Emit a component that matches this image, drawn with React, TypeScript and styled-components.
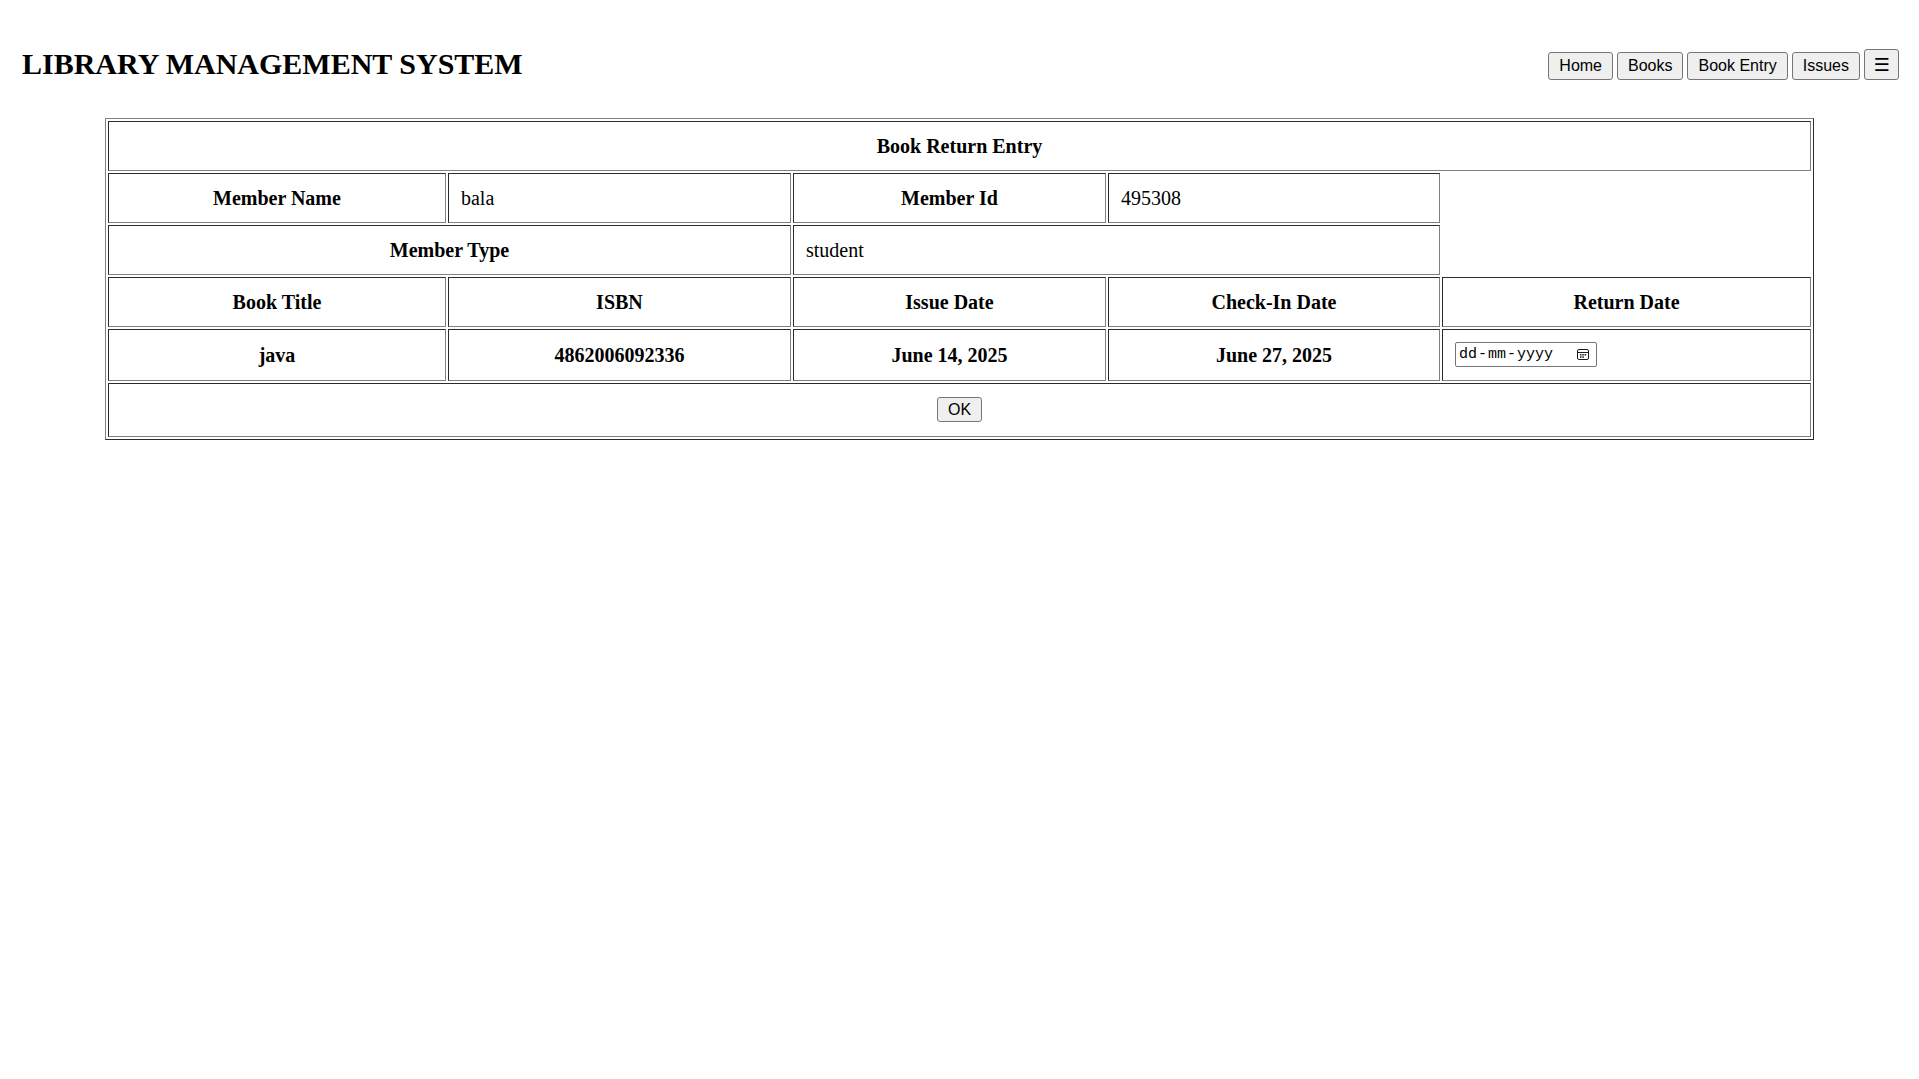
import React from "react";
import styled, { createGlobalStyle, css } from "styled-components";

const GlobalStyle = createGlobalStyle`
  html, body { margin: 0; padding: 0; background: #ffffff; }
  body {
    font-family: "Liberation Serif", "Times New Roman", serif;
    color: #000000;
  }
`;

const Header = styled.header`
  display: flex;
  justify-content: space-between;
  align-items: flex-start;
  padding: 47px 20px 0 22px;
`;

const Title = styled.h1`
  margin: 0;
  font: bold 30px/34px "Liberation Serif", "Times New Roman", serif;
  color: #000000;
`;

const Nav = styled.nav`
  display: flex;
  align-items: flex-end;
  gap: 4px;
  margin-top: 2px;
`;

const NavButton = styled.button<{ $icon?: boolean }>`
  font: 16px/18px "Liberation Sans", Arial, sans-serif;
  color: #000000;
  background: #efefef;
  border: 1px solid #767676;
  border-radius: 3px;
  padding: 4px 10px;
  margin: 0;
  ${(p) =>
    p.$icon &&
    css`
      display: flex;
      align-items: center;
      justify-content: center;
      width: 35px;
      height: 31px;
      padding: 0;
      font-family: "DejaVu Sans", "Liberation Sans", sans-serif;
      font-size: 18px;
    `}
`;

const Table = styled.table`
  width: 1709px;
  margin: 37px auto 0;
  table-layout: fixed;
  border-collapse: separate;
  border-spacing: 2px;
  border: 1px solid;
  border-color: #808080 #2b2b2b #2b2b2b #808080;
  font: 20px/24px "Liberation Serif", "Times New Roman", serif;
`;

const cellBase = css`
  padding: 12px;
  border: 1px solid;
  border-color: #2b2b2b #808080 #808080 #2b2b2b;
`;

const Th = styled.th`
  ${cellBase};
  font-weight: bold;
  text-align: center;
`;

const Td = styled.td<{ $bold?: boolean; $center?: boolean }>`
  ${cellBase};
  font-weight: ${(p) => (p.$bold ? "bold" : "normal")};
  text-align: ${(p) => (p.$center ? "center" : "left")};
`;

const DateBox = styled.span`
  display: inline-flex;
  align-items: center;
  box-sizing: border-box;
  width: 142px;
  height: 25px;
  margin-bottom: 1px;
  padding: 0 6px 0 3px;
  border: 1px solid #767676;
  border-radius: 2px;
  background: #ffffff;
  font: 15px/17px "Liberation Mono", "DejaVu Sans Mono", monospace;
  color: #000000;
  vertical-align: top;
`;

const DatePart = styled.span``;

const DateSep = styled.span`
  margin: 0 1px;
`;

const CalendarIcon = styled.svg`
  margin-left: auto;
  flex: none;
`;

const OkButton = styled.button`
  font: 16px/17px "Liberation Sans", Arial, sans-serif;
  color: #000000;
  background: #efefef;
  border: 1px solid #767676;
  border-radius: 3px;
  padding: 3px 10px;
  margin: 1px 0 2px;
  vertical-align: top;
`;

const navItems = ["Home", "Books", "Book Entry", "Issues"];
const colWidths = [338, 343, 313, 332, 369];

export default function App() {
  return (
    <>
      <GlobalStyle />
      <Header>
        <Title>LIBRARY MANAGEMENT SYSTEM</Title>
        <Nav>
          {navItems.map((item) => (
            <NavButton key={item}>{item}</NavButton>
          ))}
          <NavButton $icon>☰</NavButton>
        </Nav>
      </Header>
      <Table>
        <colgroup>
          {colWidths.map((w, i) => (
            <col key={i} style={{ width: w }} />
          ))}
        </colgroup>
        <tbody>
          <tr>
            <Th colSpan={5}>Book Return Entry</Th>
          </tr>
          <tr>
            <Th>Member Name</Th>
            <Td>bala</Td>
            <Th>Member Id</Th>
            <Td>495308</Td>
          </tr>
          <tr>
            <Th colSpan={2}>Member Type</Th>
            <Td colSpan={2}>student</Td>
          </tr>
          <tr>
            <Th>Book Title</Th>
            <Th>ISBN</Th>
            <Th>Issue Date</Th>
            <Th>Check-In Date</Th>
            <Th>Return Date</Th>
          </tr>
          <tr>
            <Td $bold $center>java</Td>
            <Td $bold $center>4862006092336</Td>
            <Td $bold $center>June 14, 2025</Td>
            <Td $bold $center>June 27, 2025</Td>
            <Td>
              <DateBox>
                <DatePart>dd</DatePart>
                <DateSep>-</DateSep>
                <DatePart>mm</DatePart>
                <DateSep>-</DateSep>
                <DatePart>yyyy</DatePart>
                <CalendarIcon width="14" height="13" viewBox="0 0 14 13">
                  <rect x="1.5" y="1.5" width="11" height="10" rx="1.5" fill="none" stroke="#1a1a1a" strokeWidth="1" />
                  <line x1="1.5" y1="4.5" x2="12.5" y2="4.5" stroke="#1a1a1a" strokeWidth="1" />
                  <rect x="4" y="6" width="1.5" height="1.5" fill="#1a1a1a" />
                  <rect x="6.3" y="6" width="1.5" height="1.5" fill="#1a1a1a" />
                  <rect x="8.6" y="6" width="1.5" height="1.5" fill="#1a1a1a" />
                  <rect x="4" y="8.3" width="1.5" height="1.5" fill="#1a1a1a" />
                  <rect x="6.3" y="8.3" width="1.5" height="1.5" fill="#1a1a1a" />
                </CalendarIcon>
              </DateBox>
            </Td>
          </tr>
          <tr>
            <Td colSpan={5} $center>
              <OkButton>OK</OkButton>
            </Td>
          </tr>
        </tbody>
      </Table>
    </>
  );
}
